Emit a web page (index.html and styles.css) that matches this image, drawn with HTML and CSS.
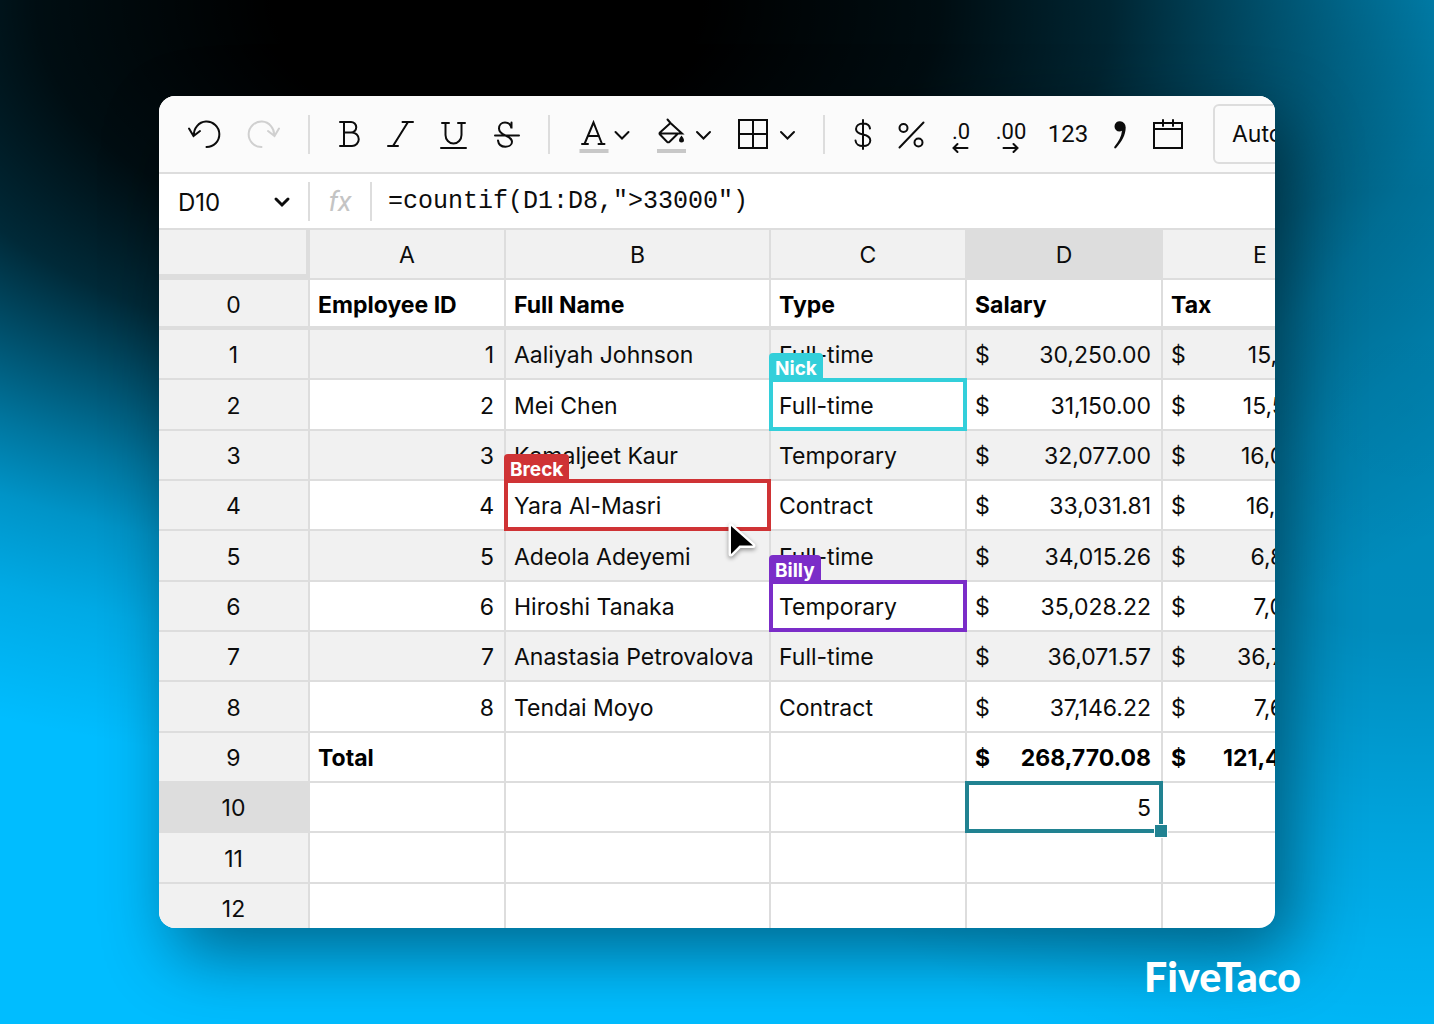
FILE: index.html
```html
<!DOCTYPE html>
<html lang="en">
<head>
<meta charset="utf-8">
<title>Employee spreadsheet</title>
<meta name="viewport" content="width=device-width, initial-scale=1">
<link rel="stylesheet" href="styles.css">
</head>
<body class="stage">
<main class="window">
  <div class="toolbar" role="toolbar" aria-label="Formatting">
    <button class="tool tool-history" aria-label="Undo"><svg class="icon" viewBox="0 0 32 32"><path d="M6 17.5A12.7 12.7 0 1 1 18.5 29M1 10.5l4.5 7.5 6.5-5"/></svg></button>
    <button class="tool tool-history" aria-label="Redo" disabled><svg class="icon" viewBox="0 0 32 32"><path d="M26 17.5A12.7 12.7 0 1 0 13.5 29M31 10.5l-4.5 7.5-6.5-5"/></svg></button>
    <span class="divider"></span>
    <button class="tool tool-style" aria-label="Bold"><svg class="icon" viewBox="0 0 32 32"><path d="M7 4h11a5.2 5.2 0 0 1 0 10.500h-7m7 0h1a6.700 6.700 0 0 1 0 13.500H7M11 4v24"/></svg></button>
    <button class="tool tool-style" aria-label="Italic"><svg class="icon" viewBox="0 0 32 32"><path d="M16.500 4H27M2 28h10M22 4 7 28"/></svg></button>
    <button class="tool tool-style" aria-label="Underline"><svg class="icon" viewBox="0 0 32 32"><path d="M3 5h7M19 5h7M6.500 5v12a8 8.500 0 0 0 16 0V5M2 30h25"/></svg></button>
    <button class="tool tool-style" aria-label="Strikethrough"><svg class="icon" viewBox="0 0 32 32"><path d="M19.500 4.500v6C19 6.500 16.500 4.500 13 4.500c-3.500 0-6 2.500-6 6 0 4 3 5.500 6.500 7 4 1.700 6.500 3 6.500 6.200 0 3-2.800 5-6.500 5-4.200 0-7-2.400-7.500-6.200M3 17.500h24"/></svg></button>
    <span class="divider"></span>
    <button class="tool tool-menu" aria-label="Text colour"><svg class="icon icon-text-color" viewBox="0 0 31 40"><path d="M4 30h6M20.500 30h6M6.500 30l9-21.500 8.500 21.500M10 22h11"/><path class="swatch" d="M1.500 37h29"/></svg><svg class="chevron" viewBox="0 0 16 16"><path d="m1.500 6 6.500 6.500L14.500 6"/></svg></button>
    <button class="tool tool-menu" aria-label="Fill colour"><svg class="icon icon-fill" viewBox="0 0 33 40"><path d="m9.500 5.500 3 3.500L24 19.500H1.500M12.500 9 2 18.500q-1 1 0 2l7 7.200q1.300 1.200 2.600 0L20 19.500"/><path class="solid" d="M23.500 21.500q2.500 3 2.500 4.500a2.300 2.300 0 0 1-5 0q0-1.500 2.500-4.500z"/><path class="swatch" d="M-1 37h29"/></svg><svg class="chevron" viewBox="0 0 16 16"><path d="m1 6 6.500 6.500L14 6"/></svg></button>
    <button class="tool tool-menu" aria-label="Borders"><svg class="icon icon-borders" viewBox="0 0 36 40"><path d="M-1 6h28v28H-1zM13 6v28M-1 20h28"/></svg><svg class="chevron" viewBox="0 0 16 16"><path d="m0 6 6.500 6.500L13 6"/></svg></button>
    <span class="divider"></span>
    <button class="tool tool-format" aria-label="Currency"><svg class="icon" viewBox="0 0 32 32"><path d="M17 2v29M24 10.500C23.500 7 20.500 5.500 17 5.500c-4 0-7 2-7 5.500 0 4 3.500 4.800 7 5.500 4 .8 7.300 2 7.300 6 0 3.500-3.300 5.500-7.300 5.500s-7.200-2-7.500-5.500"/></svg></button>
    <button class="tool tool-format" aria-label="Percent"><svg class="icon" viewBox="0 0 32 32"><path d="m3.500 29.500 24-25"/><circle cx="7.500" cy="10" r="4"/><circle cx="22.500" cy="24.500" r="4"/></svg></button>
    <button class="tool tool-format tool-decimal" aria-label="Fewer decimals"><span>.0</span><svg class="arrow" viewBox="0 0 16 10"><path d="M14.500 5h-14M4.500 1l-4 4 4 4"/></svg></button>
    <button class="tool tool-format tool-decimal" aria-label="More decimals"><span>.00</span><svg class="arrow" viewBox="0 0 16 10"><path d="M.5 5h14M10.500 1l4 4-4 4"/></svg></button>
    <button class="tool tool-number">123</button>
    <button class="tool tool-comma" aria-label="Thousands separator"><svg class="icon" viewBox="0 0 32 32"><path class="solid" d="M15 3.200a5.200 5.200 0 0 0-5.500 5.100 5 5 0 0 0 5 5.200q1.500 0 2.500-.7c-.5 6-3.500 11-7.500 15.700q-1 1.500.5 1.900.8 0 1.500-.9C16.500 24 20.700 17 20.700 9.500a5.900 5.900 0 0 0-5.700-6.300z"/></svg></button>
    <button class="tool tool-format" aria-label="Date"><svg class="icon" viewBox="0 0 32 32"><path d="M2 5h28v25H2zM2 11h28M11 2v6M21 2v6"/></svg></button>
    <select class="format-select" aria-label="Number format"><option>Automatic</option></select>
  </div>

  <div class="formula-bar">
    <div class="name-box">
      <select class="name-select" aria-label="Cell reference"><option>D10</option></select>
      <svg class="chevron chevron-bold" viewBox="0 0 16 16"><path d="m2 6 6 6 6-6"/></svg>
    </div>
    <span class="divider"></span>
    <label class="fx" for="formula"><em>f</em>x</label>
    <span class="divider"></span>
    <input class="formula" id="formula" type="text" value='=countif(D1:D8,"&gt;33000")' spellcheck="false">
  </div>

  <div class="sheet">
    <table class="grid">
      <colgroup><col class="col-index"><col class="col"><col class="col-wide"><col class="col"><col class="col"><col class="col"></colgroup>
      <thead>
        <tr><td class="corner"></td><th scope="col">A</th><th scope="col">B</th><th scope="col">C</th><th scope="col" class="active">D</th><th scope="col">E</th></tr>
      </thead>
      <tbody>
        <tr class="titles"><th scope="row">0</th><td>Employee ID</td><td>Full Name</td><td>Type</td><td>Salary</td><td>Tax</td></tr>
        <tr class="shaded"><th scope="row">1</th><td class="number">1</td><td>Aaliyah Johnson</td><td>Full-time</td><td><div class="money"><span>$</span><span>30,250.00</span></div></td><td><div class="money"><span>$</span><span>15,125.00</span></div></td></tr>
        <tr><th scope="row">2</th><td class="number">2</td><td>Mei Chen</td><td class="held">Full-time<span class="outline nick"><span class="tag">Nick</span></span></td><td><div class="money"><span>$</span><span>31,150.00</span></div></td><td><div class="money"><span>$</span><span>15,575.00</span></div></td></tr>
        <tr class="shaded"><th scope="row">3</th><td class="number">3</td><td>Kamaljeet Kaur</td><td>Temporary</td><td><div class="money"><span>$</span><span>32,077.00</span></div></td><td><div class="money"><span>$</span><span>16,038.50</span></div></td></tr>
        <tr><th scope="row">4</th><td class="number">4</td><td class="held">Yara Al-Masri<span class="outline breck"><span class="tag">Breck</span></span><svg class="pointer" viewBox="0 0 32 42"><path d="M4 4v28l8.500-8.500H26z"/></svg></td><td>Contract</td><td><div class="money"><span>$</span><span>33,031.81</span></div></td><td><div class="money"><span>$</span><span>16,515.90</span></div></td></tr>
        <tr class="shaded"><th scope="row">5</th><td class="number">5</td><td>Adeola Adeyemi</td><td>Full-time</td><td><div class="money"><span>$</span><span>34,015.26</span></div></td><td><div class="money"><span>$</span><span>6,803.05</span></div></td></tr>
        <tr><th scope="row">6</th><td class="number">6</td><td>Hiroshi Tanaka</td><td class="held">Temporary<span class="outline billy"><span class="tag">Billy</span></span></td><td><div class="money"><span>$</span><span>35,028.22</span></div></td><td><div class="money"><span>$</span><span>7,005.64</span></div></td></tr>
        <tr class="shaded"><th scope="row">7</th><td class="number">7</td><td>Anastasia Petrovalova</td><td>Full-time</td><td><div class="money"><span>$</span><span>36,071.57</span></div></td><td><div class="money"><span>$</span><span>36,762.00</span></div></td></tr>
        <tr><th scope="row">8</th><td class="number">8</td><td>Tendai Moyo</td><td>Contract</td><td><div class="money"><span>$</span><span>37,146.22</span></div></td><td><div class="money"><span>$</span><span>7,629.24</span></div></td></tr>
        <tr class="total"><th scope="row">9</th><td>Total</td><td></td><td></td><td><div class="money"><span>$</span><span>268,770.08</span></div></td><td><div class="money"><span>$</span><span>121,454.33</span></div></td></tr>
        <tr><th scope="row" class="active">10</th><td></td><td></td><td></td><td class="number held">5<span class="outline current"><span class="handle"></span></span></td><td></td></tr>
        <tr><th scope="row">11</th><td></td><td></td><td></td><td></td><td></td></tr>
        <tr><th scope="row">12</th><td></td><td></td><td></td><td></td><td></td></tr>
      </tbody>
    </table>
  </div>
</main>
<footer class="brand">FiveTaco</footer>
</body>
</html>
```

FILE: styles.css
```css
* {
  box-sizing: border-box;
}

:root {
  --line: #dddddd;
  --shade: #f1f1f1;
  --ink: #0c0c0c;
}

.stage {
  display: flex;
  flex-direction: column;
  height: 100vh;
  margin: 0;
  padding: 96px 159px 0;
  overflow: hidden;
  color: var(--ink);
  font-family: Inter, "Liberation Sans", sans-serif;
  font-size: 23px;
  background:
    radial-gradient(ellipse 75% 62% at 34% 0%, #000 20%, rgba(0, 0, 0, 0.93) 42%, rgba(0, 0, 0, 0.78) 58%, rgba(0, 0, 0, 0.56) 70%, rgba(0, 0, 0, 0.38) 80%, rgba(0, 0, 0, 0.22) 90%, rgba(0, 0, 0, 0.1) 103%, rgba(0, 0, 0, 0) 122%),
    radial-gradient(ellipse 50% 62% at 98% 40%, rgba(0, 0, 0, 0.28) 0%, rgba(0, 0, 0, 0.26) 35%, rgba(0, 0, 0, 0.14) 65%, rgba(0, 0, 0, 0.07) 85%, rgba(0, 0, 0, 0) 110%),
    #00bdff;
}

.window {
  display: flex;
  flex: 1;
  flex-direction: column;
  min-height: 0;
  overflow: hidden;
  background: #fff;
  border-radius: 16px;
  box-shadow: 16px 26px 70px rgba(0, 0, 0, 0.45);
}

.toolbar {
  display: flex;
  flex: none;
  align-items: center;
  height: 78px;
  padding-left: 15px;
  overflow: hidden;
  background: #fbfbfb;
  border-bottom: 2px solid var(--line);
}

.divider {
  flex: none;
  width: 2px;
  height: 39px;
  background: var(--line);
}

.toolbar .divider {
  margin: 0 12px 0 14px;
}

.tool {
  display: flex;
  flex: none;
  align-items: center;
  justify-content: center;
  height: 60px;
  padding: 0;
  color: inherit;
  font: 22px/22px Roboto, sans-serif;
  background: none;
  border: 0;
}

.tool:disabled {
  color: #d0d0d0;
}

.tool-history {
  width: 60px;
}

.tool-style {
  width: 53px;
}

.tool-format {
  width: 50px;
}

.tool-comma {
  width: 44px;
}

.tool-number {
  width: 62px;
  font-size: 24px;
}

.tool-menu {
  gap: 5px;
  padding: 0 12px 0 16px;
}

.tool-decimal {
  flex-direction: column;
  padding: 6px 2px 0 0;
}

.icon,
.chevron,
.arrow,
.pointer {
  flex: none;
  overflow: visible;
  fill: none;
  stroke: currentColor;
  stroke-width: 2;
  stroke-linecap: round;
}

.icon {
  width: 32px;
  height: 32px;
}

.icon-text-color {
  width: 31px;
  height: 40px;
}

.icon-fill {
  width: 33px;
  height: 40px;
}

.icon-borders {
  width: 36px;
  height: 40px;
}

.icon .solid {
  fill: currentColor;
  stroke: none;
}

.icon .swatch {
  stroke: #c8c8c8;
  stroke-width: 4;
  stroke-linecap: butt;
}

.chevron {
  width: 16px;
  height: 16px;
}

.chevron-bold {
  stroke-width: 3;
}

.arrow {
  width: 16px;
  height: 10px;
}

.format-select {
  flex: none;
  width: 200px;
  height: 60px;
  margin-left: 20px;
  padding: 0 17px;
  color: inherit;
  font: 23px Inter, sans-serif;
  background: #fbfbfb;
  border: 2px solid var(--line);
  border-radius: 6px;
  appearance: none;
}

.formula-bar {
  display: flex;
  flex: none;
  align-items: center;
  height: 56px;
  border-bottom: 2px solid var(--line);
}

.name-box {
  display: grid;
  flex: none;
  align-items: center;
  width: 149px;
}

.name-box > * {
  grid-area: 1 / 1;
}

.name-box .chevron {
  justify-self: end;
  margin-right: 18px;
  pointer-events: none;
}

.name-select {
  height: 48px;
  padding: 2px 19px 0;
  color: inherit;
  font: 24px Inter, sans-serif;
  background: none;
  border: 0;
  appearance: none;
}

.fx {
  flex: none;
  width: 60px;
  color: #c4c4c4;
  font: italic 28px Roboto, sans-serif;
  text-align: center;
}

.formula {
  flex: 1;
  min-width: 0;
  height: 48px;
  padding: 0 16px;
  color: inherit;
  font: 25px "Liberation Mono", monospace;
  background: none;
  border: 0;
  outline: 0;
}

.sheet {
  flex: 1;
  min-height: 0;
  overflow: hidden;
}

.grid {
  width: 1200px;
  table-layout: fixed;
  border-spacing: 0;
}

.col-index {
  width: 151px;
}

.col {
  width: 196px;
}

.col-wide {
  width: 265px;
}

.grid tr {
  height: 50px;
}

.grid tbody tr:nth-child(3n) {
  height: 51px;
}

.grid th,
.grid td {
  padding: 2px 10px 0 8px;
  line-height: 30px;
  text-align: left;
  white-space: nowrap;
  border: solid var(--line);
  border-width: 0 2px 2px 0;
}

.grid th {
  padding: 2px 0 0;
  font-weight: 400;
  text-align: center;
  background: var(--shade);
}

.grid .active {
  background: var(--line);
}

.grid .corner {
  background: var(--shade);
  border-width: 0 4px 6px 0;
}

.grid .titles th,
.grid .titles td {
  padding-top: 4px;
  border-bottom-width: 4px;
}

.titles td,
.total td {
  color: #000;
  font-weight: 700;
}

.shaded td {
  background: var(--shade);
}

.grid .number {
  text-align: right;
}

.money {
  display: flex;
  justify-content: space-between;
}

.held {
  position: relative;
}

/* Outlines overlap the grid lines on all four sides of the cell. */
.outline {
  position: absolute;
  z-index: 1;
  inset: -2px;
  border: 4px solid currentColor;
}

.tag {
  position: absolute;
  bottom: 100%;
  left: -4px;
  height: 29px;
  padding: 0 6px;
  color: #fff;
  font-size: 19px;
  font-weight: 700;
  line-height: 31px;
  border-radius: 4px 4px 0 0;
}

.nick {
  color: #33cfda;
}

.nick .tag {
  background: #33cfda;
}

.breck {
  color: #cf3335;
}

.breck .tag {
  background: #cf3335;
}

.billy {
  color: #7b2dc8;
}

.billy .tag {
  background: #7b2dc8;
}

.current {
  color: #218291;
}

.handle {
  position: absolute;
  right: -9px;
  bottom: -9px;
  width: 14px;
  height: 14px;
  background: currentColor;
  border: 1px solid #fff;
}

.pointer {
  position: absolute;
  z-index: 2;
  top: 41px;
  left: 221px;
  width: 32px;
  height: 42px;
  fill: #000;
  stroke: #fff;
  stroke-width: 5;
  stroke-linejoin: round;
  paint-order: stroke;
  filter: drop-shadow(0 2px 2px rgba(0, 0, 0, 0.4));
}

.brand {
  flex: none;
  align-self: flex-end;
  height: 96px;
  margin-right: -26px;
  color: #fff;
  font-family: Lato, sans-serif;
  font-size: 41px;
  font-weight: 900;
  line-height: 98px;
}
```
